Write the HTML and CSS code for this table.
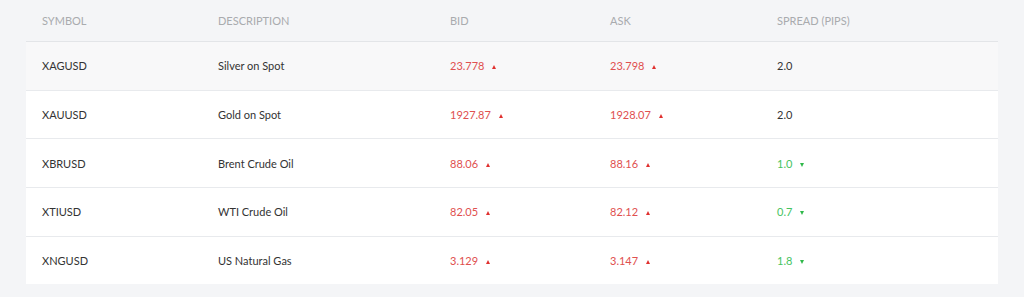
FILE: index.html
```html
<!DOCTYPE html>
<html>
<head>
<meta charset="utf-8">
<link rel="stylesheet" href="styles.css">
</head>
<body>
<div class="wrap">
  <table class="quotes">
    <thead>
      <tr><th class="c1">SYMBOL</th><th class="c2">DESCRIPTION</th><th class="c3">BID</th><th class="c4">ASK</th><th class="c5">SPREAD (PIPS)</th></tr>
    </thead>
    <tbody>
      <tr class="alt"><td>XAGUSD</td><td>Silver on Spot</td><td class="up">23.778 <span class="tri-up"></span></td><td class="up">23.798 <span class="tri-up"></span></td><td>2.0</td></tr>
      <tr><td>XAUUSD</td><td>Gold on Spot</td><td class="up">1927.87 <span class="tri-up"></span></td><td class="up">1928.07 <span class="tri-up"></span></td><td>2.0</td></tr>
      <tr><td>XBRUSD</td><td>Brent Crude Oil</td><td class="up">88.06 <span class="tri-up"></span></td><td class="up">88.16 <span class="tri-up"></span></td><td class="down">1.0 <span class="tri-down"></span></td></tr>
      <tr><td>XTIUSD</td><td>WTI Crude Oil</td><td class="up">82.05 <span class="tri-up"></span></td><td class="up">82.12 <span class="tri-up"></span></td><td class="down">0.7 <span class="tri-down"></span></td></tr>
      <tr><td>XNGUSD</td><td>US Natural Gas</td><td class="up">3.129 <span class="tri-up"></span></td><td class="up">3.147 <span class="tri-up"></span></td><td class="down">1.8 <span class="tri-down"></span></td></tr>
    </tbody>
  </table>
</div>
</body>
</html>
```
FILE: styles.css
```css
html, body {
  margin: 0;
  padding: 0;
  background: #f4f5f7;
  font-family: "Lato", "Inter", sans-serif;
}
.wrap {
  padding: 0 26px 13px 26px;
}
.quotes {
  width: 972px;
  border-collapse: collapse;
  table-layout: fixed;
}
.quotes th, .quotes td {
  text-align: left;
  padding: 0 0 0 16px;
  white-space: nowrap;
}
.quotes th {
  height: 41px;
  font-size: 11px;
  font-weight: 400;
  color: #a9abae;
  border-bottom: 1px solid #e3e5e8;
}
.quotes td {
  height: 47.7px;
  font-size: 11px;
  color: #333;
  background: #fff;
  border-bottom: 1px solid #e8eaed;
}
.quotes tbody tr:last-child td { border-bottom: 0; }
.quotes tr.alt td { background: #f8f8f9; }
.c1 { width: 160px; }
.c2 { width: 216px; }
.c3 { width: 144px; }
.c4 { width: 151px; }
.up { color: #e0504f !important; }
.down { color: #46c35f !important; }
.tri-up, .tri-down {
  display: inline-block;
  width: 0; height: 0;
  margin-left: 5px;
  vertical-align: 1px;
  border-left: 2.5px solid transparent;
  border-right: 2.5px solid transparent;
}
.tri-up { border-bottom: 4px solid #e0302f; }
.tri-down { border-top: 4px solid #2fb84a; }
```
